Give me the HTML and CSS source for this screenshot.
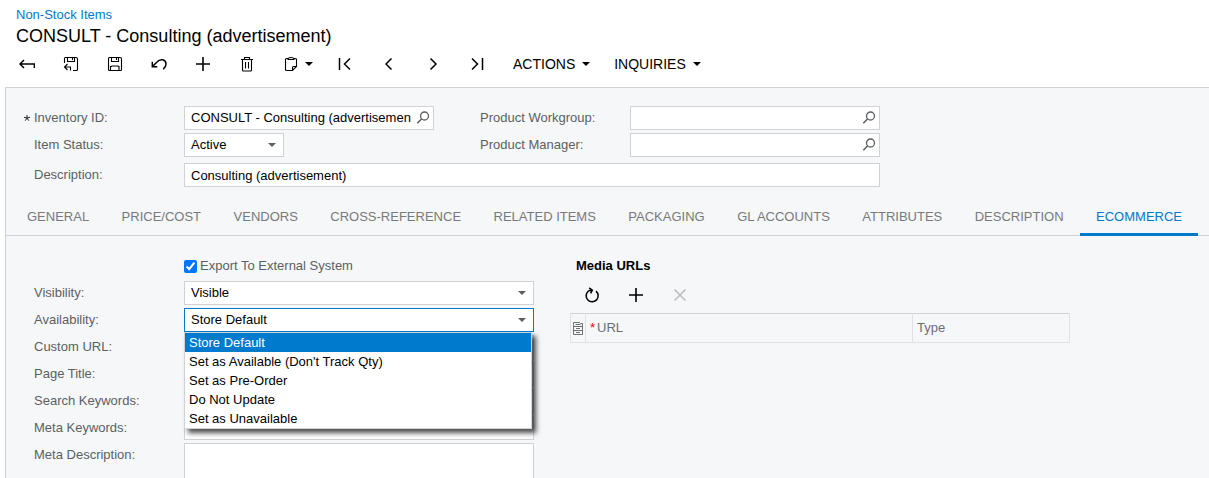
FILE: index.html
```html
<!DOCTYPE html>
<html lang="en">
<head>
<meta charset="utf-8">
<title>Non-Stock Items</title>
<link rel="stylesheet" href="styles.css">
</head>
<body>
<svg class="defs" width="0" height="0" aria-hidden="true">
  <symbol id="caret" viewBox="0 0 8 4"><path d="M0 0h8L4 4z" fill="currentColor"/></symbol>
  <symbol id="lens" viewBox="0 0 14 14"><circle cx="8.500" cy="5" r="4" fill="none" stroke="currentColor" stroke-width="1.300"/><path d="M5.500 8L1.300 12.200" stroke="currentColor" stroke-width="1.600" fill="none"/></symbol>
  <symbol id="plus" viewBox="0 0 16 16"><path d="M8 1v14M1 8h14" stroke="currentColor" stroke-width="1.600" fill="none"/></symbol>
</svg>
<div class="app">
  <header class="head">
    <a class="crumb" href="#">Non-Stock Items</a>
    <h1 class="title">CONSULT - Consulting (advertisement)</h1>
  </header>
  <div class="toolbar" role="toolbar" aria-label="Record">
    <button class="tool" aria-label="Back"><svg class="ico" viewBox="0 0 16 16"><path d="M15.400 12V8H1M5 4L1 8l4 4"/></svg></button>
    <button class="tool" aria-label="Save and close"><svg class="ico thin" viewBox="0 0 16 16"><path d="M1.500 7V2.500q0-1 1-1H13q1.500 0 1.500 1.500v10.500q0 1-1 1H10M4.500 1.500v4h7v-4M9.500 2v2M7.500 14.500v-3.500H1.500M4.500 8L1.500 11l3 3"/></svg></button>
    <button class="tool" aria-label="Save"><svg class="ico thin" viewBox="0 0 16 16"><path d="M2.500 1.500H13q1.500 0 1.500 1.500v10.500q0 1-1 1h-11q-1 0-1-1v-11q0-1 1-1zM4.500 1.500v4h7v-4M9.500 2v2M3.500 14.500v-4h1l.5-.5h6l.5.5h.5v4"/></svg></button>
    <button class="tool" aria-label="Undo"><svg class="ico" viewBox="0 0 16 16"><path d="M1.300 5.800v5h5M1.500 10.600L6 6C9.500 2 15 3.500 15 8q0 3-2.800 5.200"/></svg></button>
    <button class="tool" aria-label="Add"><svg class="ico"><use href="#plus"/></svg></button>
    <button class="tool" aria-label="Delete"><svg class="ico thin" viewBox="0 0 16 16"><path d="M2 3.500h12M5.500 3.500v-2h5v2M3.500 3.500v10.500q0 1 1 1h7q1 0 1-1v-10.500M6.500 6v6.500M9.500 6v6.500"/></svg></button>
    <button class="tool tool-menu" aria-label="Clipboard"><svg class="ico thin" viewBox="0 0 16 16"><path d="M5 2.500H3.500q-1 0-1 1v10q0 1 1 1H9.500l4-4v-7q0-1-1-1H11M5 3.500q0-2 3-2t3 2zM9.500 14.500v-3q0-1 1-1h3"/></svg><svg class="caret"><use href="#caret"/></svg></button>
    <button class="tool" aria-label="First"><svg class="ico" viewBox="0 0 16 16"><path d="M2.500 2v12M13 2.500L7.500 8 13 13.500"/></svg></button>
    <button class="tool" aria-label="Previous"><svg class="ico" viewBox="0 0 16 16"><path d="M10.500 2.500L5 8l5.500 5.500"/></svg></button>
    <button class="tool" aria-label="Next"><svg class="ico" viewBox="0 0 16 16"><path d="M5.500 2.500L11 8l-5.500 5.500"/></svg></button>
    <button class="tool" aria-label="Last"><svg class="ico" viewBox="0 0 16 16"><path d="M3 2.500L8.500 8 3 13.500M13.500 2v12"/></svg></button>
    <button class="menu">ACTIONS<svg class="caret"><use href="#caret"/></svg></button>
    <button class="menu">INQUIRIES<svg class="caret"><use href="#caret"/></svg></button>
  </div>

  <main class="panel">
    <form class="summary">
      <label for="inv"><span class="req"><svg viewBox="0 0 6 6"><path d="M3 0v3M0 2.300L3 3l3-.7M1.200 5.700L3 3l1.800 2.700"/></svg></span>Inventory ID:</label>
      <div class="lookup"><input id="inv" type="text" value="CONSULT - Consulting (advertisement)"><button type="button" aria-label="Select item"><svg><use href="#lens"/></svg></button></div>
      <label class="second" for="wg">Product Workgroup:</label>
      <div class="lookup"><input id="wg" type="text"><button type="button" aria-label="Select workgroup"><svg><use href="#lens"/></svg></button></div>
      <label class="plain" for="st">Item Status:</label>
      <div class="pick short"><select id="st"><option>Active</option></select><svg class="caret"><use href="#caret"/></svg></div>
      <label class="second" for="pm">Product Manager:</label>
      <div class="lookup"><input id="pm" type="text"><button type="button" aria-label="Select manager"><svg><use href="#lens"/></svg></button></div>
      <label class="plain desc" for="ds">Description:</label>
      <input class="box desc wide" id="ds" type="text" value="Consulting (advertisement)">
    </form>

    <nav class="tabs" role="tablist">
      <button role="tab">GENERAL</button>
      <button role="tab">PRICE/COST</button>
      <button role="tab">VENDORS</button>
      <button role="tab">CROSS-REFERENCE</button>
      <button role="tab">RELATED ITEMS</button>
      <button role="tab">PACKAGING</button>
      <button role="tab">GL ACCOUNTS</button>
      <button role="tab">ATTRIBUTES</button>
      <button role="tab">DESCRIPTION</button>
      <button role="tab" class="active" aria-selected="true">ECOMMERCE</button>
    </nav>

    <div class="content">
      <form class="fields">
        <label class="check"><input type="checkbox" checked>Export To External System</label>
        <label for="vis">Visibility:</label>
        <div class="pick"><select id="vis"><option>Visible</option></select><svg class="caret"><use href="#caret"/></svg></div>
        <label for="av">Availability:</label>
        <div class="pick open">
          <select id="av"><option>Store Default</option></select><svg class="caret"><use href="#caret"/></svg>
          <ul class="popup" role="listbox">
            <li class="on" role="option" aria-selected="true">Store Default</li>
            <li role="option">Set as Available (Don't Track Qty)</li>
            <li role="option">Set as Pre-Order</li>
            <li role="option">Do Not Update</li>
            <li role="option">Set as Unavailable</li>
          </ul>
        </div>
        <label for="cu">Custom URL:</label><input class="box" id="cu" type="text">
        <label for="pt">Page Title:</label><input class="box" id="pt" type="text">
        <label for="sk">Search Keywords:</label><input class="box" id="sk" type="text">
        <label for="mk">Meta Keywords:</label><input class="box" id="mk" type="text">
        <label for="md">Meta Description:</label><textarea class="box" id="md" rows="4"></textarea>
      </form>

      <section class="media">
        <h2>Media URLs</h2>
        <div class="media-tools" role="toolbar" aria-label="Media">
          <button class="tool" aria-label="Refresh"><svg class="ico" viewBox="0 0 16 16"><path d="M12 4.200A6 6 0 1 1 4.200 4.300Q5.500 3 8 3.200M5.200 .8L8.300 3.200 6.600 6.300"/></svg></button>
          <button class="tool" aria-label="Add row"><svg class="ico"><use href="#plus"/></svg></button>
          <button class="tool" aria-label="Delete row" disabled><svg class="ico" viewBox="0 0 16 16"><path d="M2.500 2.500l11 11M13.500 2.500l-11 11"/></svg></button>
        </div>
        <table>
          <thead><tr>
            <th class="c-icon" aria-label="Files"><svg viewBox="0 0 10 13"><path d="M.5 2.500V.5h6l1 1h2v11h-9zM.5 4.500h9M.5 8.500h9M2.500 2.500h5M3 6.500h4M3 10.500h4"/></svg></th>
            <th><span class="star">*</span>URL</th>
            <th class="c-type">Type</th>
          </tr></thead>
        </table>
      </section>
    </div>
  </main>
</div>
</body>
</html>
```
FILE: styles.css
```css
* { box-sizing: border-box; }

body {
  margin: 0;
  background: #fff;
  color: #000;
  font: 13px/18px "Liberation Sans", Arial, sans-serif;
}

button, input, select, textarea { font: inherit; color: inherit; margin: 0; }
button { border: 0; background: none; padding: 0; }
.defs { position: absolute; }

.app {
  display: flex;
  flex-direction: column;
  height: 100vh;
  overflow: hidden;
}

.head { padding: 6px 16px 0; }
.crumb { display: block; color: #007acc; text-decoration: none; }
.title { margin: 0; font-size: 18px; line-height: 24px; font-weight: 400; }

.toolbar { display: flex; padding: 0 0 7px 5px; }
.tool {
  display: flex;
  align-items: center;
  justify-content: center;
  width: 44px;
  height: 32px;
}
.tool:disabled { color: #b9bbbd; }
.tool-menu { width: 54px; gap: 6px; padding-left: 4px; }
.menu {
  display: flex;
  align-items: center;
  gap: 7px;
  padding: 0 10px 0 14px;
  font-size: 14px;
}
.ico { width: 16px; height: 16px; fill: none; stroke: currentColor; stroke-width: 1.5; }
.ico.thin { stroke-width: 1.1; }
.caret { width: 8px; height: 4px; }

.panel {
  flex: 1;
  min-height: 0;
  margin-left: 5px;
  border: solid #d0d2d5;
  border-width: 1px 0 0 1px;
  background: #f5f7f9;
}

label { color: #5c5f62; line-height: 24px; }

.summary {
  display: grid;
  grid-template-columns: 160px 250px 196px 250px;
  row-gap: 3px;
  padding: 18px 0 10px 18px;
}
.summary .second { padding-left: 46px; }
.summary .plain { padding-left: 10px; }
.summary .desc { margin-top: 3px; }
.wide { grid-column: 2 / -1; }
.req { display: inline-block; width: 10px; }
.req svg { display: inline-block; width: 6px; height: 6px; vertical-align: 1px; fill: none; stroke: #222; }

.box, .lookup, .pick select {
  width: 100%;
  height: 24px;
  padding: 0 6px;
  border: 1px solid #d0d2d5;
  border-radius: 0;
  background: #fff;
  outline: 0;
}
textarea.box { display: block; height: 64px; resize: none; }

.lookup { display: flex; align-items: center; gap: 5px; padding-right: 3px; }
.lookup input { flex: 1; min-width: 0; border: 0; padding: 0; outline: 0; background: none; }
.lookup svg { display: block; width: 14px; height: 14px; color: #5c5f62; }

.pick { position: relative; height: 24px; }
.pick.short { width: 100px; }
.pick select { display: block; appearance: none; }
.pick .caret { position: absolute; right: 8px; top: 10px; color: #5c5f62; pointer-events: none; }
.pick.open select { border-color: #007acc; }

.popup {
  position: absolute;
  top: 100%;
  left: 0;
  right: 2px;
  z-index: 1;
  margin: 0;
  padding: 0;
  border: 1px solid #d0d2d5;
  background: #fff;
  box-shadow: 4px 4px 5px rgba(0, 0, 0, .7);
  list-style: none;
  line-height: 19px;
}
.popup li { padding: 0 4px; }
.popup .on { background: #007acc; color: #fff; }

.tabs {
  display: flex;
  justify-content: space-between;
  padding: 0 11px 0 5px;
  border-bottom: 1px solid #d0d2d5;
}
.tabs button {
  height: 39px;
  margin-bottom: -1px;
  padding: 3px 16px 0;
  border-bottom: 3px solid transparent;
  color: #777a7d;
  white-space: nowrap;
}
.tabs .active { border-color: #007acc; color: #007acc; }

.content { display: flex; gap: 36px; padding: 18px 16px 0 28px; }
.fields {
  display: grid;
  grid-template-columns: 150px 350px;
  align-content: start;
  gap: 3px 0;
}
.check { grid-column: 2; display: flex; align-items: center; gap: 3px; }
.check input { width: 13px; height: 13px; accent-color: #0075ff; }

.media { width: 500px; }
.media h2 { margin: 0; padding-left: 6px; font-size: 13px; line-height: 24px; }
.media-tools { display: flex; padding: 1px 0 2px; }
table { width: 100%; border-collapse: collapse; table-layout: fixed; }
th {
  height: 29px;
  padding: 0 4px;
  border: 1px solid #dfe1e4;
  border-top-color: #d0d2d5;
  color: #6c6f72;
  font-weight: 400;
  text-align: left;
}
.c-icon { width: 15px; padding: 0 2px; }
.c-icon svg { display: block; width: 10px; height: 13px; fill: none; stroke: #6c6f72; }
.c-type { width: 157px; }
.star { color: #f00; padding-right: 2px; }
```
